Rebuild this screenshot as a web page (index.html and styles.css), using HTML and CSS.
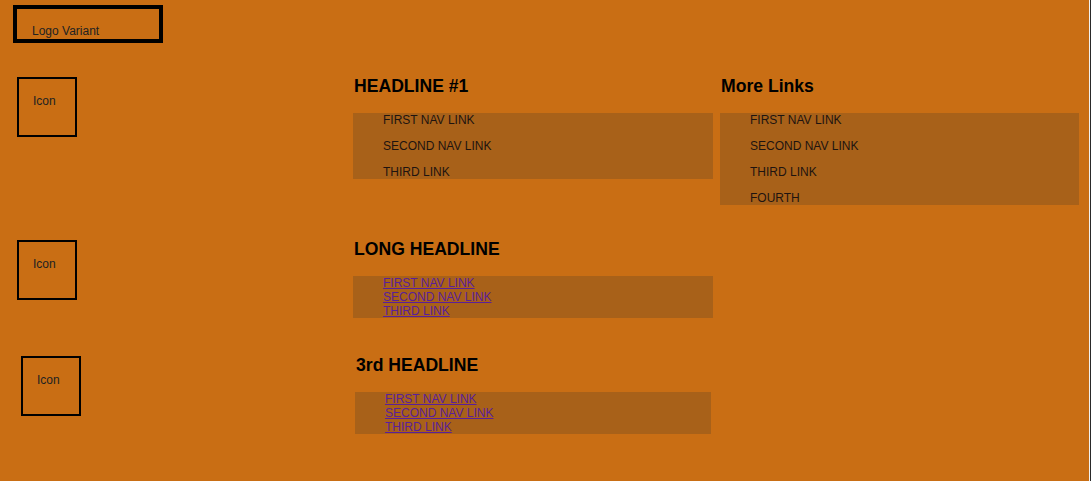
FILE: index.html
```html
<!DOCTYPE html>
<html lang="en">
<head>
<meta charset="utf-8">
<title>Nav</title>
<link rel="stylesheet" href="styles.css">
</head>
<body>
<div class="page">
  <header class="header">
    <div class="logo">Logo Variant</div>
  </header>
  <main class="main">
    <section class="section">
      <div class="section__icon-col"><div class="icon">Icon</div></div>
      <div class="section__col">
        <h2 class="headline">HEADLINE #1</h2>
        <ul class="nav">
          <li class="nav__item">FIRST NAV LINK</li>
          <li class="nav__item">SECOND NAV LINK</li>
          <li class="nav__item">THIRD LINK</li>
        </ul>
      </div>
      <div class="section__col section__col--right">
        <h2 class="headline">More Links</h2>
        <ul class="nav">
          <li class="nav__item">FIRST NAV LINK</li>
          <li class="nav__item">SECOND NAV LINK</li>
          <li class="nav__item">THIRD LINK</li>
          <li class="nav__item">FOURTH</li>
        </ul>
      </div>
    </section>
    <section class="section">
      <div class="section__icon-col"><div class="icon">Icon</div></div>
      <div class="section__col">
        <h2 class="headline">LONG HEADLINE</h2>
        <ul class="nav nav--links">
          <li class="nav__item"><a class="nav__link" href="#">FIRST NAV LINK</a></li>
          <li class="nav__item"><a class="nav__link" href="#">SECOND NAV LINK</a></li>
          <li class="nav__item"><a class="nav__link" href="#">THIRD LINK</a></li>
        </ul>
      </div>
    </section>
    <section class="section section--alt">
      <div class="section__icon-col"><div class="icon">Icon</div></div>
      <div class="section__col">
        <h2 class="headline">3rd HEADLINE</h2>
        <ul class="nav nav--links">
          <li class="nav__item"><a class="nav__link" href="#">FIRST NAV LINK</a></li>
          <li class="nav__item"><a class="nav__link" href="#">SECOND NAV LINK</a></li>
          <li class="nav__item"><a class="nav__link" href="#">THIRD LINK</a></li>
        </ul>
      </div>
    </section>
  </main>
</div>
</body>
</html>
```

FILE: styles.css
```css
html {
  background: #2a2a2a;
}
body {
  margin: 0;
  width: 1089px;
  min-height: 481px;
  border-right: 1px solid #f2f2f2;
  background: #c96e14;
  font-family: "Liberation Sans", Arial, sans-serif;
  font-size: 12px;
  line-height: 14px;
  color: #1c1c1c;
}
.page {
  display: flex;
  flex-direction: column;
}
.header {
  padding: 5px 0 0 13px;
}
.logo {
  box-sizing: border-box;
  width: 150px;
  height: 38px;
  border: 4px solid #000;
  padding: 15px 0 0 15px;
  color: #222;
}
.main {
  display: flex;
  flex-direction: column;
  margin-top: 32px;
}
.section {
  display: flex;
  align-items: flex-start;
}
.section + .section {
  margin-top: 33px;
}
.section + .section--alt {
  margin-top: 36px;
}
.section__icon-col {
  width: 353px;
  flex: none;
}
.icon {
  box-sizing: border-box;
  width: 60px;
  height: 60px;
  margin: 2px 0 0 17px;
  border: 2px solid #000;
  padding: 15px 0 0 14px;
  color: #222;
}
.section--alt .icon {
  margin-left: 21px;
}
.section__col {
  width: 360px;
  flex: none;
}
.section__col--right {
  width: 359px;
  margin-left: 7px;
}
.section--alt .section__col {
  width: 356px;
  margin-left: 2px;
}
.headline {
  margin: 0 0 15px;
  padding-left: 1px;
  font-size: 17.6px;
  line-height: 23px;
  font-weight: bold;
  color: #000;
}
.nav {
  margin: 0;
  padding: 0 0 0 30px;
  list-style: none;
  background: #a86119;
  display: flex;
  flex-direction: column;
  gap: 12px;
}
.nav--links {
  gap: 0;
}
.nav__item {
  line-height: 14px;
  color: #1e1410;
}
.nav__link {
  color: #5a1f9a;
  text-decoration: underline;
}
```
